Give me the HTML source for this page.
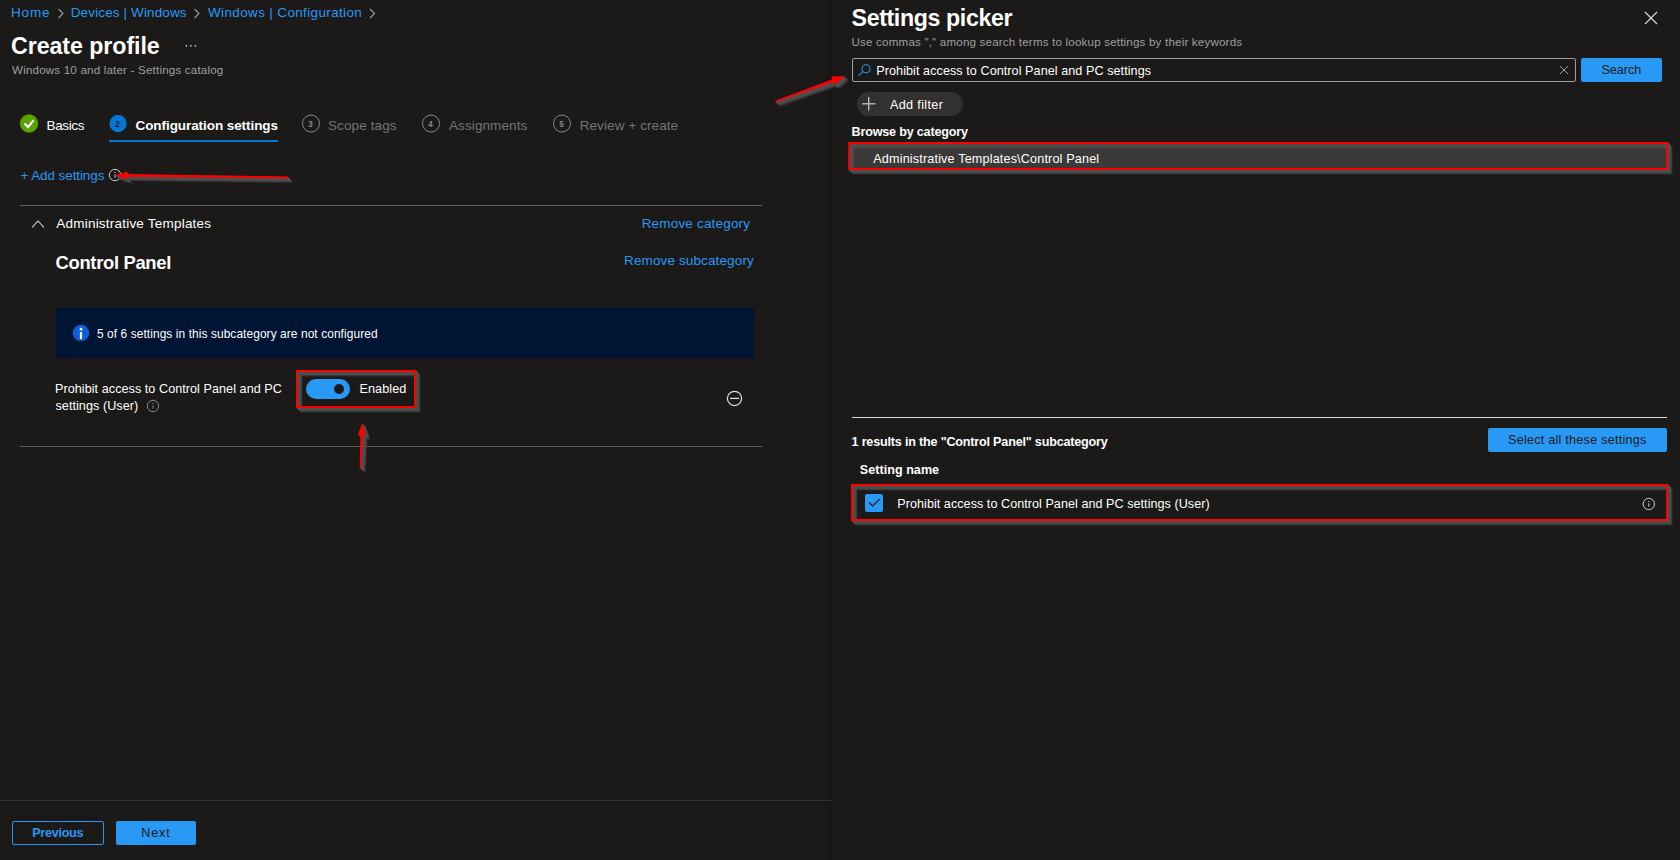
<!DOCTYPE html>
<html lang="en"><head><meta charset="utf-8"><title>Create profile - Settings picker</title>
<style>
html,body{margin:0;padding:0;background:#1b1a19;}
body{width:1680px;height:860px;position:relative;overflow:hidden;font-family:"Liberation Sans",sans-serif;color:#fff}
.t{position:absolute;white-space:pre;}
.b{position:absolute;box-sizing:border-box}
.ov{position:absolute;left:0;top:0;pointer-events:none}
#picker{position:absolute;left:832px;top:0;width:848px;height:860px;background:#1b1a19;box-shadow:none}
</style></head><body>
<div class="b" style="left:109px;top:140px;width:169px;height:2px;background:#0078d4"></div>
<div class="b" style="left:20px;top:205px;width:742px;height:1px;background:#605e5c"></div>
<div class="b" style="left:56px;top:308px;width:698px;height:50px;background:#001433;border-radius:2px"></div>
<div class="b" style="left:306px;top:379px;width:44px;height:20px;border-radius:10px;background:#2899f5"></div>
<div class="b" style="left:334px;top:384px;width:10px;height:10px;border-radius:50%;background:#1b1a19"></div>
<div class="b" style="left:20px;top:446px;width:742px;height:1px;background:#605e5c"></div>
<div class="b" style="left:0;top:800px;width:832px;height:1px;background:#363534"></div>
<div class="b" style="left:12px;top:821px;width:92px;height:24px;border:1px solid #2899f5;border-radius:2px"></div>
<div class="b" style="left:116px;top:821px;width:80px;height:24px;background:#2899f5;border-radius:2px"></div>
<div class="b" style="left:820px;top:0;width:12px;height:860px;background:linear-gradient(to right,rgba(0,0,0,0),rgba(0,0,0,.15))"></div>
<div id="picker"></div>
<div class="b" style="left:852px;top:58px;width:724px;height:24px;border:1px solid #a19f9d;border-radius:2px"></div>
<div class="b" style="left:1581px;top:58px;width:81px;height:24px;background:#2899f5;border-radius:2px"></div>
<div class="b" style="left:857px;top:92px;width:106px;height:24px;background:#323130;border-radius:12px"></div>
<div class="b" style="left:850px;top:144px;width:817px;height:25px;background:#3b3a39"></div>
<div class="b" style="left:852px;top:416.6px;width:815px;height:1.4px;background:#dddbd9"></div>
<div class="b" style="left:1488px;top:428px;width:179px;height:24px;background:#2899f5;border-radius:2px"></div>
<div class="b" style="left:865px;top:494px;width:18px;height:18px;background:#2899f5;border-radius:2px"></div>
<main>
<div class="t" style="left:11.00px;top:4.00px;font-size:13.5px;line-height:18px;font-weight:400;color:#2899f5;letter-spacing:0.833px">Home</div>
<div class="t" style="left:70.75px;top:4.00px;font-size:13.5px;line-height:18px;font-weight:400;color:#2899f5;letter-spacing:0.125px">Devices | Windows</div>
<div class="t" style="left:208.00px;top:4.00px;font-size:13.5px;line-height:18px;font-weight:400;color:#2899f5;letter-spacing:0.352px">Windows | Configuration</div>
<div class="t" style="left:11.00px;top:31.00px;font-size:23.2px;line-height:30px;font-weight:700;color:#ffffff;letter-spacing:-0.058px">Create profile</div>
<div class="t" style="left:12.00px;top:62.00px;font-size:11.6px;line-height:15px;font-weight:400;color:#a19f9d;letter-spacing:0.184px">Windows 10 and later - Settings catalog</div>
<div class="t" style="left:46.50px;top:117.00px;font-size:13.5px;line-height:18px;font-weight:400;color:#ffffff;letter-spacing:-0.350px">Basics</div>
<div class="t" style="left:135.50px;top:117.00px;font-size:13.5px;line-height:18px;font-weight:700;color:#ffffff;letter-spacing:-0.071px">Configuration settings</div>
<div class="t" style="left:328.00px;top:117.00px;font-size:13.5px;line-height:18px;font-weight:400;color:#767472;letter-spacing:0.111px">Scope tags</div>
<div class="t" style="left:449.00px;top:117.00px;font-size:13.5px;line-height:18px;font-weight:400;color:#767472;letter-spacing:0.095px">Assignments</div>
<div class="t" style="left:579.70px;top:117.00px;font-size:13.5px;line-height:18px;font-weight:400;color:#767472;letter-spacing:0.089px">Review + create</div>
<div class="t" style="left:20.50px;top:167.00px;font-size:13.5px;line-height:18px;font-weight:400;color:#2899f5;letter-spacing:-0.096px">+ Add settings</div>
<div class="t" style="left:56.30px;top:215.00px;font-size:13.5px;line-height:18px;font-weight:400;color:#ffffff;letter-spacing:0.215px">Administrative Templates</div>
<div class="t" style="left:641.70px;top:215.00px;font-size:13.5px;line-height:18px;font-weight:400;color:#2899f5;letter-spacing:0.182px">Remove category</div>
<div class="t" style="left:55.55px;top:251.00px;font-size:18.4px;line-height:24px;font-weight:700;color:#ffffff;letter-spacing:-0.317px">Control Panel</div>
<div class="t" style="left:624.00px;top:252.00px;font-size:13.5px;line-height:18px;font-weight:400;color:#2899f5;letter-spacing:0.129px">Remove subcategory</div>
<div class="t" style="left:97.00px;top:327.00px;font-size:11.9px;line-height:15px;font-weight:400;color:#ffffff;letter-spacing:0.092px">5 of 6 settings in this subcategory are not configured</div>
<div class="t" style="left:55.00px;top:381.00px;font-size:12.6px;line-height:16px;font-weight:400;color:#ffffff;letter-spacing:0.057px">Prohibit access to Control Panel and PC</div>
<div class="t" style="left:55.50px;top:398.00px;font-size:12.6px;line-height:16px;font-weight:400;color:#ffffff;letter-spacing:0.054px">settings (User)</div>
<div class="t" style="left:359.40px;top:381.00px;font-size:12.6px;line-height:16px;font-weight:400;color:#ffffff;letter-spacing:0.117px">Enabled</div>
<div class="t" style="left:32.25px;top:825.00px;font-size:12.6px;line-height:16px;font-weight:700;color:#2899f5;letter-spacing:-0.286px">Previous</div>
<div class="t" style="left:141.25px;top:825.00px;font-size:12.6px;line-height:16px;font-weight:400;color:#1b1a19;letter-spacing:0.833px">Next</div>
</main>
<aside>
<div class="t" style="left:851.55px;top:3.00px;font-size:23.2px;line-height:30px;font-weight:700;color:#ffffff;letter-spacing:-0.375px">Settings picker</div>
<div class="t" style="left:851.55px;top:34.00px;font-size:11.6px;line-height:15px;font-weight:400;color:#a19f9d;letter-spacing:0.180px">Use commas &quot;,&quot; among search terms to lookup settings by their keywords</div>
<div class="t" style="left:876.30px;top:63.00px;font-size:12.6px;line-height:16px;font-weight:400;color:#ffffff;letter-spacing:0.067px">Prohibit access to Control Panel and PC settings</div>
<div class="t" style="left:1601.50px;top:62.00px;font-size:12.6px;line-height:16px;font-weight:400;color:#1b1a19;letter-spacing:-0.050px">Search</div>
<div class="t" style="left:890.00px;top:97.00px;font-size:12.6px;line-height:16px;font-weight:400;color:#ffffff;letter-spacing:0.356px">Add filter</div>
<div class="t" style="left:851.55px;top:124.00px;font-size:12.6px;line-height:16px;font-weight:700;color:#ffffff;letter-spacing:-0.197px">Browse by category</div>
<div class="t" style="left:873.30px;top:151.00px;font-size:12.6px;line-height:16px;font-weight:400;color:#ffffff;letter-spacing:0.169px">Administrative Templates\Control Panel</div>
<div class="t" style="left:851.55px;top:434.00px;font-size:12.6px;line-height:16px;font-weight:700;color:#ffffff;letter-spacing:-0.194px">1 results in the &quot;Control Panel&quot; subcategory</div>
<div class="t" style="left:1508.00px;top:432.00px;font-size:12.6px;line-height:16px;font-weight:400;color:#1b1a19;letter-spacing:0.250px">Select all these settings</div>
<div class="t" style="left:859.75px;top:462.00px;font-size:12.6px;line-height:16px;font-weight:700;color:#ffffff;letter-spacing:0.027px">Setting name</div>
<div class="t" style="left:897.30px;top:496.00px;font-size:12.6px;line-height:16px;font-weight:400;color:#ffffff;letter-spacing:0.042px">Prohibit access to Control Panel and PC settings (User)</div>
</aside>

<svg class="ov" width="1680" height="860" viewBox="0 0 1680 860">
<defs>
<filter id="sh" x="-20%" y="-20%" width="140%" height="160%"><feDropShadow dx="4" dy="4.5" stdDeviation="0.6" flood-color="#6e6e6e" flood-opacity="0.75"/></filter>
</defs>
<!-- breadcrumb chevrons -->
<g fill="none" stroke="#a19f9d" stroke-width="1.1">
<polyline points="58.5,9 63,13.5 58.5,18"/><polyline points="194.5,9 199,13.5 194.5,18"/><polyline points="370,9 374.5,13.5 370,18"/>
</g>
<!-- ellipsis -->
<g fill="#d2d0ce"><circle cx="186.4" cy="45.8" r="0.85"/><circle cx="190.9" cy="45.8" r="0.85"/><circle cx="195.4" cy="45.8" r="0.85"/></g>
<!-- steps -->
<circle cx="29.05" cy="123.5" r="9.15" fill="#57a300"/>
<polyline points="24.5,123.5 28.1,127.1 33.6,120.1" fill="none" stroke="#fff" stroke-width="2.1"/>
<circle cx="118" cy="123.5" r="8.65" fill="#0078d4"/><text transform="translate(117.4,127.0) scale(0.85,1)" font-size="9.5" font-weight="700" text-anchor="middle" fill="#1b1a19" font-family="Liberation Sans, sans-serif">2</text>
<circle cx="311" cy="123.5" r="8.5" fill="none" stroke="#8a8886" stroke-width="1"/><text transform="translate(310.6,127.0) scale(0.85,1)" font-size="9.5" font-weight="700" text-anchor="middle" fill="#8a8886" font-family="Liberation Sans, sans-serif">3</text>
<circle cx="431" cy="123.5" r="8.5" fill="none" stroke="#8a8886" stroke-width="1"/><text transform="translate(430.6,127.0) scale(0.85,1)" font-size="9.5" font-weight="700" text-anchor="middle" fill="#8a8886" font-family="Liberation Sans, sans-serif">4</text>
<circle cx="562" cy="123.5" r="8.5" fill="none" stroke="#8a8886" stroke-width="1"/><text transform="translate(561.6,127.0) scale(0.85,1)" font-size="9.5" font-weight="700" text-anchor="middle" fill="#8a8886" font-family="Liberation Sans, sans-serif">5</text>
<!-- add settings info -->
<circle cx="115" cy="175" r="5.7" fill="none" stroke="#c8c6c4" stroke-width="1"/><rect x="114.5" y="174.2" width="1" height="3.5" fill="#c8c6c4"/><rect x="114.5" y="171.9" width="1" height="1.1" fill="#c8c6c4"/>
<!-- chevron up -->
<polyline points="32,227.5 38,221 44,227.5" fill="none" stroke="#e1dfdd" stroke-width="1.1"/>
<!-- info filled -->
<circle cx="81" cy="333.05" r="8.2" fill="#0b60d8"/>
<rect x="79.9" y="332.1" width="2.2" height="7" fill="#fff"/><circle cx="81" cy="329.2" r="1.4" fill="#fff"/>
<!-- small info next to setting -->
<circle cx="153" cy="406" r="5.7" fill="none" stroke="#8a8886" stroke-width="1"/><rect x="152.5" y="405.2" width="1" height="3.5" fill="#8a8886"/><rect x="152.5" y="402.9" width="1" height="1.1" fill="#8a8886"/>
<!-- minus circle -->
<circle cx="734.5" cy="398.4" r="7.1" fill="none" stroke="#e1dfdd" stroke-width="1.25"/>
<line x1="730" y1="398.4" x2="739.2" y2="398.4" stroke="#e1dfdd" stroke-width="1.3"/>
<!-- right panel icons -->
<g stroke="#e1dfdd" stroke-width="1.1"><line x1="1645" y1="12" x2="1657" y2="24"/><line x1="1657" y1="12" x2="1645" y2="24"/></g>
<g stroke="#a19f9d" stroke-width="1"><line x1="1560" y1="66" x2="1568" y2="74"/><line x1="1568" y1="66" x2="1560" y2="74"/></g>
<g stroke="#2899f5" stroke-width="1.05" fill="none"><circle cx="866" cy="68.8" r="4"/><line x1="863.1" y1="71.7" x2="858.4" y2="75.6"/></g>
<g stroke="#c8c6c4" stroke-width="1.3"><line x1="862" y1="103.8" x2="875.4" y2="103.8"/><line x1="868.7" y1="97" x2="868.7" y2="110.5"/></g>
<polyline points="869,502.3 872.6,505.9 880,498.9" fill="none" stroke="#1b1a19" stroke-width="1.1"/>
<circle cx="1648.8" cy="504" r="5.7" fill="none" stroke="#c8c6c4" stroke-width="1"/><rect x="1648.3" y="503.2" width="1" height="3.5" fill="#c8c6c4"/><rect x="1648.3" y="500.9" width="1" height="1.1" fill="#c8c6c4"/>
<!-- annotations -->
<g style="filter:blur(0.4px)"><rect x="302.0" y="376.0" width="118" height="36" fill="none" stroke="#4f4f4f" stroke-width="2" opacity="0.1"/>
<rect x="854.3" y="148.0" width="817.7" height="26" fill="none" stroke="#4f4f4f" stroke-width="2" opacity="0.1"/>
<rect x="857.0" y="490.0" width="815" height="35" fill="none" stroke="#4f4f4f" stroke-width="2" opacity="0.1"/>
<polygon points="293.0,181.6 132.0,179.0 132.1,176.4 120.0,180.2 131.9,184.4 132.0,181.8 293.0,183.4" fill="#4f4f4f" opacity="0.1"/>
<polygon points="366.3,473.0 368.2,440.0 370.8,440.2 367.3,428.0 362.8,439.8 365.4,439.9 364.7,473.0" fill="#4f4f4f" opacity="0.1"/>
<polygon points="780.8,107.3 838.3,87.1 839.3,90.0 850.0,81.3 836.2,81.5 837.3,84.3 780.2,105.7" fill="#4f4f4f" opacity="0.1"/>
<rect x="301.5" y="375.5" width="118" height="36" fill="none" stroke="#4f4f4f" stroke-width="2" opacity="0.222"/>
<rect x="853.8" y="147.5" width="817.7" height="26" fill="none" stroke="#4f4f4f" stroke-width="2" opacity="0.222"/>
<rect x="856.5" y="489.5" width="815" height="35" fill="none" stroke="#4f4f4f" stroke-width="2" opacity="0.222"/>
<polygon points="292.5,181.1 131.5,178.5 131.6,175.9 119.5,179.7 131.4,183.9 131.5,181.3 292.5,182.9" fill="#4f4f4f" opacity="0.222"/>
<polygon points="365.8,472.5 367.7,439.5 370.3,439.7 366.8,427.5 362.3,439.3 364.9,439.4 364.2,472.5" fill="#4f4f4f" opacity="0.222"/>
<polygon points="780.3,106.8 837.8,86.6 838.8,89.5 849.5,80.8 835.7,81.0 836.8,83.8 779.7,105.2" fill="#4f4f4f" opacity="0.222"/>
<rect x="301.0" y="375.0" width="118" height="36" fill="none" stroke="#4f4f4f" stroke-width="2" opacity="0.286"/>
<rect x="853.3" y="147.0" width="817.7" height="26" fill="none" stroke="#4f4f4f" stroke-width="2" opacity="0.286"/>
<rect x="856.0" y="489.0" width="815" height="35" fill="none" stroke="#4f4f4f" stroke-width="2" opacity="0.286"/>
<polygon points="292.0,180.6 131.0,178.0 131.1,175.4 119.0,179.2 130.9,183.4 131.0,180.8 292.0,182.4" fill="#4f4f4f" opacity="0.286"/>
<polygon points="365.3,472.0 367.2,439.0 369.8,439.2 366.3,427.0 361.8,438.8 364.4,438.9 363.7,472.0" fill="#4f4f4f" opacity="0.286"/>
<polygon points="779.8,106.3 837.3,86.1 838.3,89.0 849.0,80.3 835.2,80.5 836.3,83.3 779.2,104.7" fill="#4f4f4f" opacity="0.286"/>
<rect x="300.5" y="374.5" width="118" height="36" fill="none" stroke="#4f4f4f" stroke-width="2" opacity="0.4"/>
<rect x="852.8" y="146.5" width="817.7" height="26" fill="none" stroke="#4f4f4f" stroke-width="2" opacity="0.4"/>
<rect x="855.5" y="488.5" width="815" height="35" fill="none" stroke="#4f4f4f" stroke-width="2" opacity="0.4"/>
<polygon points="291.5,180.1 130.5,177.5 130.6,174.9 118.5,178.7 130.4,182.9 130.5,180.3 291.5,181.9" fill="#4f4f4f" opacity="0.4"/>
<polygon points="364.8,471.5 366.7,438.5 369.3,438.7 365.8,426.5 361.3,438.3 363.9,438.4 363.2,471.5" fill="#4f4f4f" opacity="0.4"/>
<polygon points="779.3,105.8 836.8,85.6 837.8,88.5 848.5,79.8 834.7,80.0 835.8,82.8 778.7,104.2" fill="#4f4f4f" opacity="0.4"/>
<rect x="300.0" y="374.0" width="118" height="36" fill="none" stroke="#4f4f4f" stroke-width="2" opacity="0.667"/>
<rect x="852.3" y="146.0" width="817.7" height="26" fill="none" stroke="#4f4f4f" stroke-width="2" opacity="0.667"/>
<rect x="855.0" y="488.0" width="815" height="35" fill="none" stroke="#4f4f4f" stroke-width="2" opacity="0.667"/>
<polygon points="291.0,179.6 130.0,177.0 130.1,174.4 118.0,178.2 129.9,182.4 130.0,179.8 291.0,181.4" fill="#4f4f4f" opacity="0.667"/>
<polygon points="364.3,471.0 366.2,438.0 368.8,438.2 365.3,426.0 360.8,437.8 363.4,437.9 362.7,471.0" fill="#4f4f4f" opacity="0.667"/>
<polygon points="778.8,105.3 836.3,85.1 837.3,88.0 848.0,79.3 834.2,79.5 835.3,82.3 778.2,103.7" fill="#4f4f4f" opacity="0.667"/>
<rect x="299.5" y="373.5" width="118" height="36" fill="none" stroke="#4f4f4f" stroke-width="2" opacity="1.0"/>
<rect x="851.8" y="145.5" width="817.7" height="26" fill="none" stroke="#4f4f4f" stroke-width="2" opacity="1.0"/>
<rect x="854.5" y="487.5" width="815" height="35" fill="none" stroke="#4f4f4f" stroke-width="2" opacity="1.0"/>
<polygon points="290.5,179.1 129.5,176.5 129.6,173.9 117.5,177.7 129.4,181.9 129.5,179.3 290.5,180.9" fill="#4f4f4f" opacity="1.0"/>
<polygon points="363.8,470.5 365.7,437.5 368.3,437.7 364.8,425.5 360.3,437.3 362.9,437.4 362.2,470.5" fill="#4f4f4f" opacity="1.0"/>
<polygon points="778.3,104.8 835.8,84.6 836.8,87.5 847.5,78.8 833.7,79.0 834.8,81.8 777.7,103.2" fill="#4f4f4f" opacity="1.0"/>
<rect x="299.0" y="373.0" width="118" height="36" fill="none" stroke="#4f4f4f" stroke-width="2" opacity="1.0"/>
<rect x="851.3" y="145.0" width="817.7" height="26" fill="none" stroke="#4f4f4f" stroke-width="2" opacity="1.0"/>
<rect x="854.0" y="487.0" width="815" height="35" fill="none" stroke="#4f4f4f" stroke-width="2" opacity="1.0"/>
<polygon points="290.0,178.6 129.0,176.0 129.1,173.4 117.0,177.2 128.9,181.4 129.0,178.8 290.0,180.4" fill="#4f4f4f" opacity="1.0"/>
<polygon points="363.3,470.0 365.2,437.0 367.8,437.2 364.3,425.0 359.8,436.8 362.4,436.9 361.7,470.0" fill="#4f4f4f" opacity="1.0"/>
<polygon points="777.8,104.3 835.3,84.1 836.3,87.0 847.0,78.3 833.2,78.5 834.3,81.3 777.2,102.7" fill="#4f4f4f" opacity="1.0"/>
<rect x="298.5" y="372.5" width="118" height="36" fill="none" stroke="#4f4f4f" stroke-width="2" opacity="1.0"/>
<rect x="850.8" y="144.5" width="817.7" height="26" fill="none" stroke="#4f4f4f" stroke-width="2" opacity="1.0"/>
<rect x="853.5" y="486.5" width="815" height="35" fill="none" stroke="#4f4f4f" stroke-width="2" opacity="1.0"/>
<polygon points="289.5,178.1 128.5,175.5 128.6,172.9 116.5,176.7 128.4,180.9 128.5,178.3 289.5,179.9" fill="#4f4f4f" opacity="1.0"/>
<polygon points="362.8,469.5 364.7,436.5 367.3,436.7 363.8,424.5 359.3,436.3 361.9,436.4 361.2,469.5" fill="#4f4f4f" opacity="1.0"/>
<polygon points="777.3,103.8 834.8,83.6 835.8,86.5 846.5,77.8 832.7,78.0 833.8,80.8 776.7,102.2" fill="#4f4f4f" opacity="1.0"/>
<rect x="298.0" y="372.0" width="118" height="36" fill="none" stroke="#4f4f4f" stroke-width="2" opacity="1.0"/>
<rect x="850.3" y="144.0" width="817.7" height="26" fill="none" stroke="#4f4f4f" stroke-width="2" opacity="1.0"/>
<rect x="853.0" y="486.0" width="815" height="35" fill="none" stroke="#4f4f4f" stroke-width="2" opacity="1.0"/>
<polygon points="289.0,177.6 128.0,175.0 128.1,172.4 116.0,176.2 127.9,180.4 128.0,177.8 289.0,179.4" fill="#4f4f4f" opacity="1.0"/>
<polygon points="362.3,469.0 364.2,436.0 366.8,436.2 363.3,424.0 358.8,435.8 361.4,435.9 360.7,469.0" fill="#4f4f4f" opacity="1.0"/>
<polygon points="776.8,103.3 834.3,83.1 835.3,86.0 846.0,77.3 832.2,77.5 833.3,80.3 776.2,101.7" fill="#4f4f4f" opacity="1.0"/>
<rect x="297.5" y="371.5" width="118" height="36" fill="none" stroke="#4f4f4f" stroke-width="2" opacity="1.0"/>
<rect x="849.8" y="143.5" width="817.7" height="26" fill="none" stroke="#4f4f4f" stroke-width="2" opacity="1.0"/>
<rect x="852.5" y="485.5" width="815" height="35" fill="none" stroke="#4f4f4f" stroke-width="2" opacity="1.0"/>
<polygon points="288.5,177.1 127.5,174.5 127.6,171.9 115.5,175.7 127.4,179.9 127.5,177.3 288.5,178.9" fill="#4f4f4f" opacity="1.0"/>
<polygon points="361.8,468.5 363.7,435.5 366.3,435.7 362.8,423.5 358.3,435.3 360.9,435.4 360.2,468.5" fill="#4f4f4f" opacity="1.0"/>
<polygon points="776.3,102.8 833.8,82.6 834.8,85.5 845.5,76.8 831.7,77.0 832.8,79.8 775.7,101.2" fill="#4f4f4f" opacity="1.0"/></g>
<rect x="297.0" y="371.0" width="118" height="36" fill="none" stroke="#ff0000" stroke-width="2" opacity="1"/>
<rect x="849.3" y="143.0" width="817.7" height="26" fill="none" stroke="#ff0000" stroke-width="2" opacity="1"/>
<rect x="852.0" y="485.0" width="815" height="35" fill="none" stroke="#ff0000" stroke-width="2" opacity="1"/>
<polygon points="288.0,176.6 127.0,174.0 127.1,171.4 115.0,175.2 126.9,179.4 127.0,176.8 288.0,178.4" fill="#ff0000" opacity="1"/>
<polygon points="361.3,468.0 363.2,435.0 365.8,435.2 362.3,423.0 357.8,434.8 360.4,434.9 359.7,468.0" fill="#ff0000" opacity="1"/>
<polygon points="775.8,102.3 833.3,82.1 834.3,85.0 845.0,76.3 831.2,76.5 832.3,79.3 775.2,100.7" fill="#ff0000" opacity="1"/>
</svg>
</body></html>
